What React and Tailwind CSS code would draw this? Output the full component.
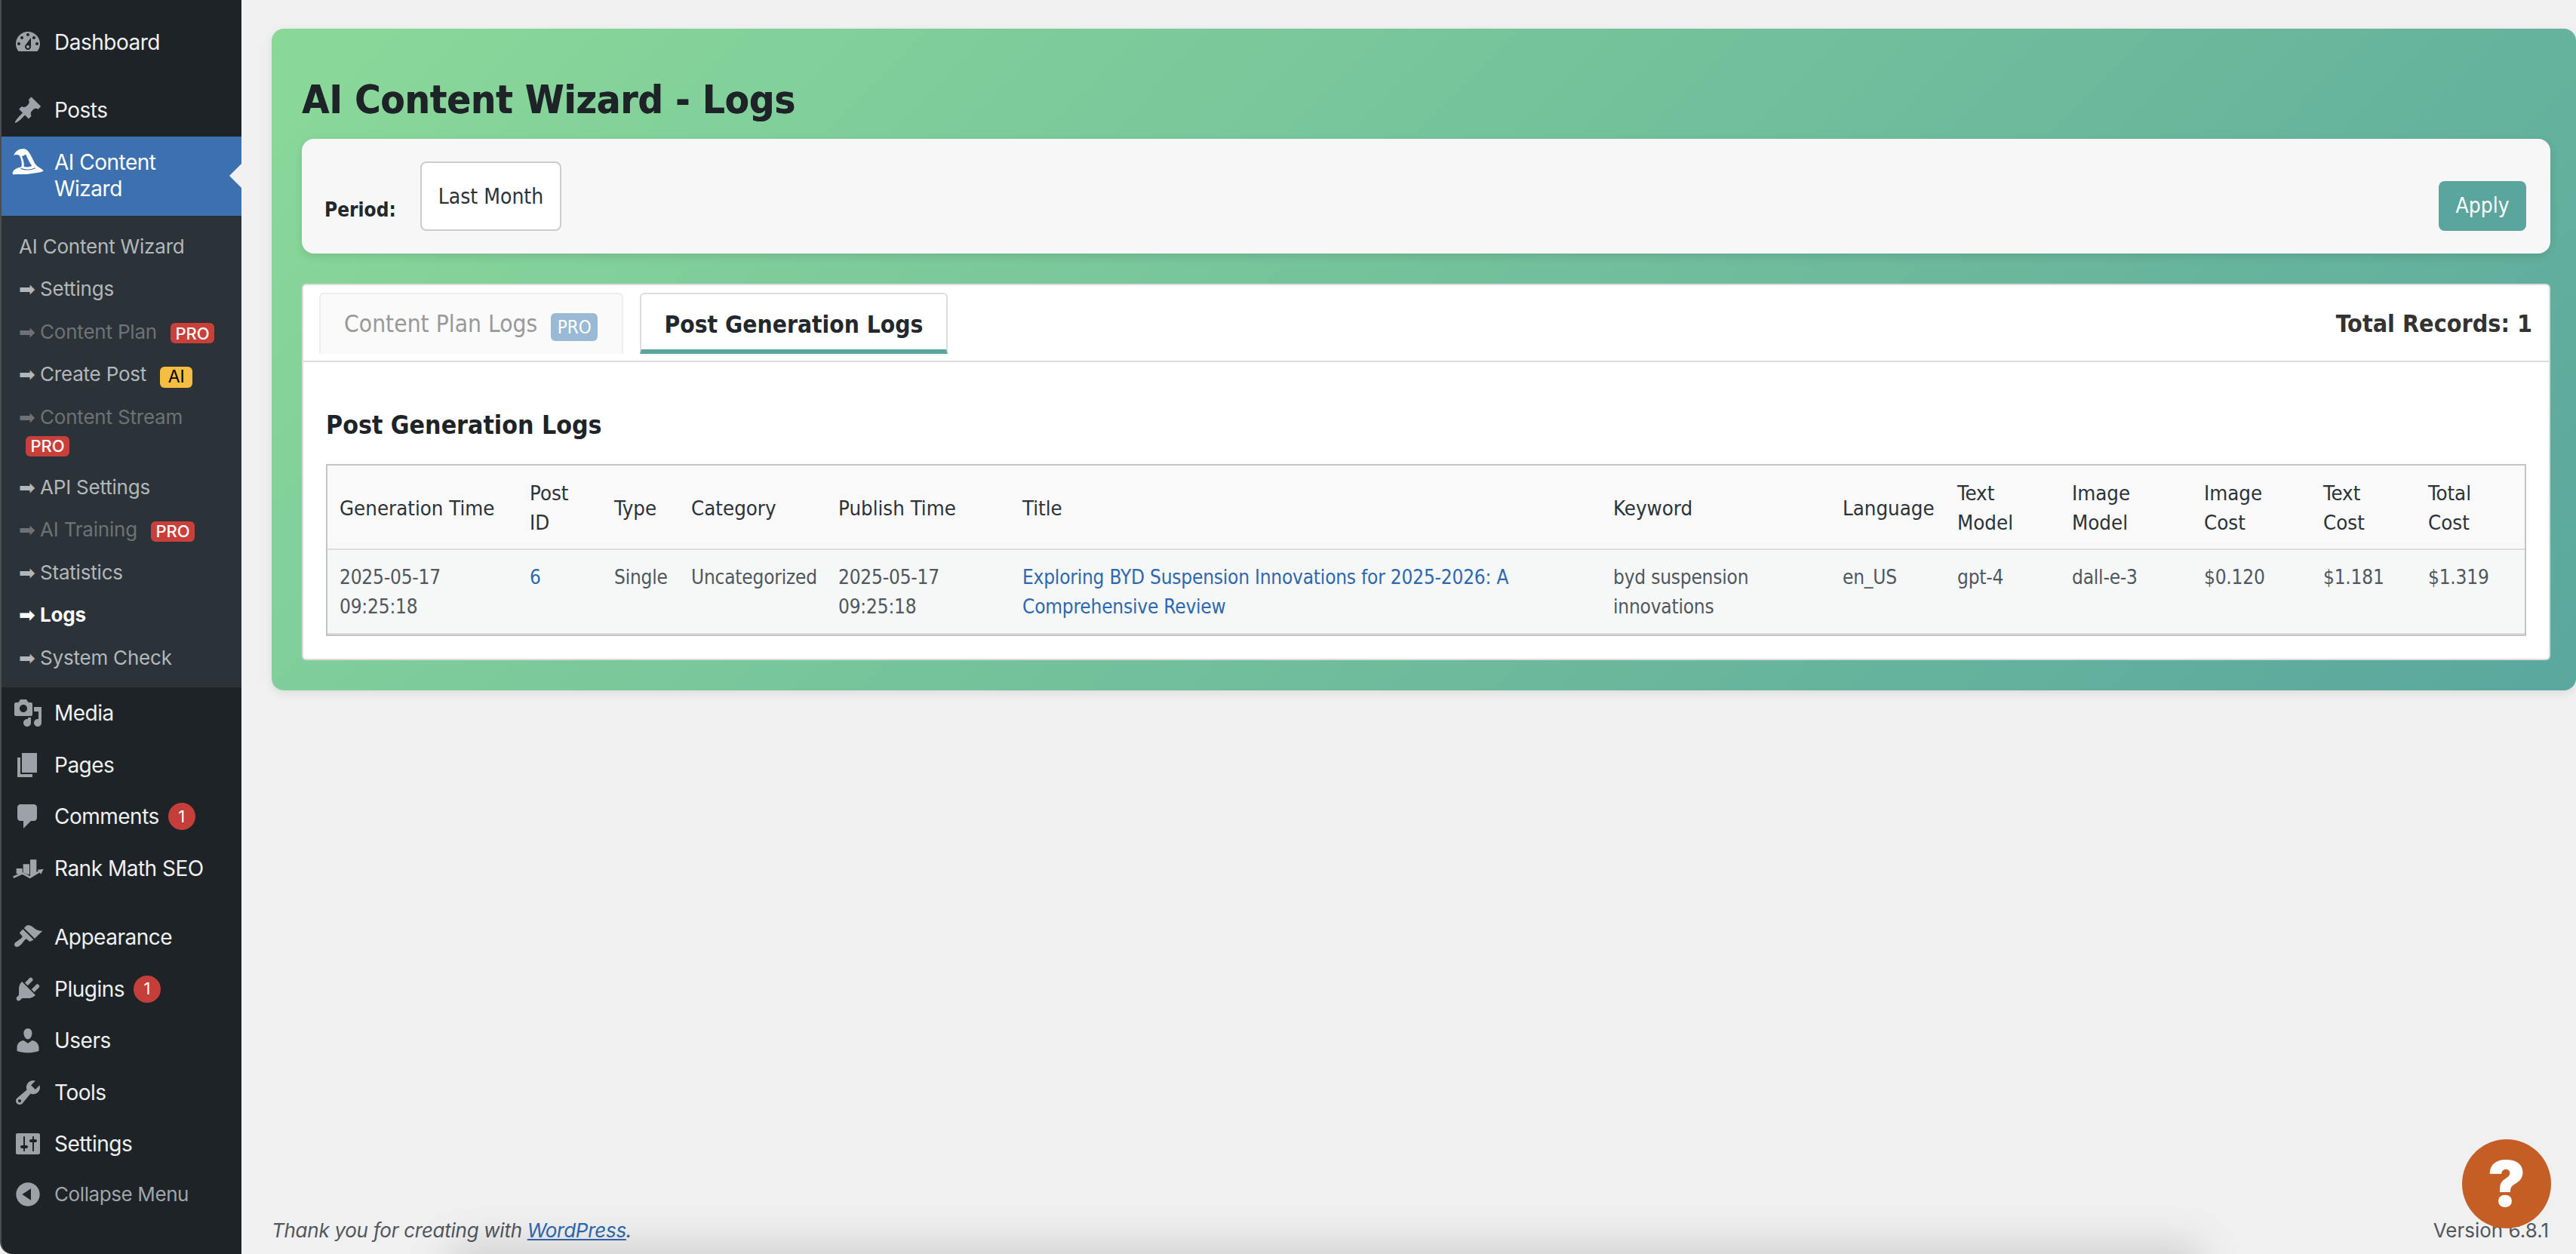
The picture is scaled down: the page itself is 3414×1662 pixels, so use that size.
import React from "react";

const Ic = ({ d, className = "" }) => (
  <svg viewBox="0 0 20 20" className={`w-[40px] h-[40px] fill-[#9ca2a7] ${className}`}>
    <path d={d} fillRule="evenodd" />
  </svg>
);

const icons = {
  dashboard: "M3.76 16h12.48c1.1-1.37 1.76-3.11 1.76-5 0-4.42-3.58-8-8-8s-8 3.58-8 8c0 1.89.66 3.63 1.76 5zM10 4c.55 0 1 .45 1 1s-.45 1-1 1-1-.45-1-1 .45-1 1-1zM6 6c.55 0 1 .45 1 1s-.45 1-1 1-1-.45-1-1 .45-1 1-1zm8 0c.55 0 1 .45 1 1s-.45 1-1 1-1-.45-1-1 .45-1 1-1zm-5.37 5.55L12 7v6c0 1.1-.9 2-2 2s-2-.9-2-2c0-.57.24-1.08.63-1.45zM4 10c.55 0 1 .45 1 1s-.45 1-1 1-1-.45-1-1 .45-1 1-1zm12 0c.55 0 1 .45 1 1s-.45 1-1 1-1-.45-1-1 .45-1 1-1zm-5 3c0-.55-.45-1-1-1s-1 .45-1 1 .45 1 1 1 1-.45 1-1z",
  post: "M10.44 3.02l1.82-1.82 6.36 6.35-1.83 1.82c-1.05-.68-2.48-.57-3.41.36l-.75.75c-.92.93-1.04 2.35-.35 3.41l-1.83 1.82-2.41-2.41-2.8 2.79c-.42.42-3.38 2.71-3.8 2.29s1.86-3.39 2.28-3.81l2.79-2.79L4.1 9.36l1.83-1.82c1.05.69 2.48.57 3.4-.36l.75-.75c.93-.92 1.05-2.35.36-3.41z",
  media: "M13 11V4c0-.55-.45-1-1-1h-1.67L9 1H5L3.67 3H2c-.55 0-1 .45-1 1v7c0 .55.45 1 1 1h10c.55 0 1-.45 1-1zM7 4.5c1.38 0 2.5 1.12 2.5 2.5S8.38 9.5 7 9.5 4.5 8.38 4.5 7 5.62 4.5 7 4.5zM14 6h5v10.5c0 1.38-1.12 2.5-2.5 2.5S14 17.88 14 16.5s1.12-2.5 2.5-2.5c.17 0 .34.02.5.05V9h-3V6zm-4 8.05V13h2v3.5c0 1.38-1.12 2.5-2.5 2.5S7 17.88 7 16.5 8.12 14 9.5 14c.17 0 .34.02.5.05z",
  pages: "M6 15V2h10v13H6zm-1 1h8v2H3V5h2v11z",
  comments: "M5 2h9c1.1 0 2 .9 2 2v7c0 1.1-.9 2-2 2h-2l-5 5v-5H5c-1.1 0-2-.9-2-2V4c0-1.1.9-2 2-2z",
  appearance: "M14.48 11.06L7.41 3.99l1.5-1.5c.5-.56 2.3-.47 3.51.32 1.21.8 1.43 1.28 2.91 2.1 1.18.64 2.45 1.26 4.45.85zm-.71.71L6.7 4.7 4.93 6.47c-.39.39-.39 1.02 0 1.41l1.06 1.06c.39.39.39 1.03 0 1.42-.6.6-1.43 1.11-2.21 1.69-.35.26-.7.53-1.01.84C1.43 13.23.4 14.96 1.49 16.06c1.1 1.1 2.83.07 4.17-1.27.31-.31.58-.66.84-1.01.58-.78 1.09-1.61 1.69-2.21.39-.39 1.02-.39 1.41 0l1.06 1.06c.39.39 1.02.39 1.41 0z",
  plugins: "M13.11 4.36L9.87 7.6 8 5.73l3.24-3.24c.35-.34 1.05-.2 1.56.32.52.51.66 1.21.31 1.55zm-8 1.77l.91-1.12 9.01 9.01-1.19.84c-.71.71-2.63 1.16-3.82 1.16H6.14L4.9 17.26c-.59.59-1.54.59-2.12 0-.59-.58-.59-1.53 0-2.12l1.24-1.24v-3.88c0-1.13.4-3.19 1.09-3.89zm7.26 3.97l3.24-3.24c.34-.35 1.04-.21 1.55.31.52.51.66 1.21.31 1.55l-3.24 3.25z",
  users: "M10 9.25c-2.27 0-2.73-3.44-2.73-3.44C7 4.02 7.82 2 9.97 2c2.16 0 2.98 2.02 2.71 3.81 0 0-.41 3.44-2.68 3.44zm0 2.57L12.72 10c2.39 0 4.52 2.33 4.52 4.53v2.49s-3.65 1.13-7.24 1.13c-3.65 0-7.24-1.13-7.24-1.13v-2.49c0-2.25 1.94-4.48 4.47-4.48z",
  tools: "M16.68 9.77c-1.34 1.34-3.3 1.67-4.95.99l-5.41 6.52c-.99.99-2.59.99-3.58 0s-.99-2.59 0-3.57l6.52-5.42c-.68-1.65-.35-3.61.99-4.95 1.28-1.28 3.12-1.62 4.72-1.06l-2.89 2.89 2.82 2.82 2.86-2.87c.53 1.58.18 3.39-1.08 4.65zM3.81 16.21c.4.39 1.04.39 1.43 0 .4-.4.4-1.04 0-1.43-.39-.4-1.03-.4-1.43 0-.39.39-.39 1.03 0 1.43z",
  settings: "M18 16V4c0-.55-.45-1-1-1H3c-.55 0-1 .45-1 1v12c0 .55.45 1 1 1h14c.55 0 1-.45 1-1zM8 11h1c.55 0 1 .45 1 1s-.45 1-1 1H8v1.5c0 .28-.22.5-.5.5s-.5-.22-.5-.5V13H6c-.55 0-1-.45-1-1s.45-1 1-1h1V5.5c0-.28.22-.5.5-.5s.5.22.5.5V11zm5-2h-1c-.55 0-1-.45-1-1s.45-1 1-1h1V5.5c0-.28.22-.5.5-.5s.5.22.5.5V7h1c.55 0 1 .45 1 1s-.45 1-1 1h-1v5.5c0 .28-.22.5-.5.5s-.5-.22-.5-.5V9z",
  collapse: "M10 2.16c4.33 0 7.84 3.51 7.84 7.84s-3.51 7.84-7.84 7.84S2.16 14.33 2.16 10 5.71 2.16 10 2.16zm2 11.72V6.12L6.18 9.97z",
};

const Hat = () => (
  <svg viewBox="0 0 168 150" className="w-[56px] h-[50px]">
    <path
      fill="#fff"
      fillRule="evenodd"
      d="M28 48 C34 30 50 20 70 22 C88 26 96 50 112 80 C120 92 135 98 146 108 C140 116 125 116 100 120 C80 124 55 122 24 124 C20 112 30 100 58 94 C62 80 58 62 50 48 C42 44 34 44 28 48 Z M60 52 C68 47 72 46 76 44 C82 60 92 78 100 90 C90 94 78 96 68 92 C70 80 66 66 60 52 Z"
    />
    <path fill="none" stroke="#3c70ae" strokeWidth="3.5" d="M56 100 C72 106 96 106 114 98" />
  </svg>
);

const RankMath = () => (
  <svg viewBox="0 0 168 150" className="w-[56px] h-[50px]">
    <path fill="#a0a5a9" d="M38 75 H62 V90 L50 96 H38 Z M65 58 H90 V100 L78 97 L65 91 Z M93 40 H118 V92 L104 102 L93 107 Z" />
    <path fill="none" stroke="#a0a5a9" strokeWidth="8" d="M26 110 L62 94 L92 110 L132 86" />
    <path fill="#a0a5a9" d="M122 80 L146 77 L136 98 Z" />
  </svg>
);

const Top = ({ icon, children, h = "h-[68.5px]", extra, dim }) => (
  <div className={`${h} flex items-center relative`}>
    <div className="w-[70px] flex justify-center shrink-0">{icon}</div>
    <span className={dim ? "text-[26px] tracking-[-0.4px] text-[#a0a5aa]" : "text-[28px] tracking-[-0.5px] text-[#f0f0f1]"}>{children}</span>
    {extra}
  </div>
);

const Count = () => (
  <span className="ml-[12px] w-[36px] h-[36px] rounded-full bg-[#c43e3a] text-white text-[22px] flex items-center justify-center">1</span>
);

const Pro = ({ className = "" }) => (
  <span className={`inline-flex items-center justify-center w-[58px] h-[27px] rounded-[6px] bg-[#c9403a] text-white text-[22px] leading-none tracking-normal font-medium align-[-1px] ${className}`}>PRO</span>
);

const Sub = ({ children, off, cur, arrow = true, after }) => (
  <div className={`pl-[23px] pr-[14px] py-[10px] leading-[36.5px] text-[26px] tracking-[-0.2px] ${cur ? "text-white font-bold" : off ? "text-[#6e7275]" : "text-[#b3b7bb]"}`}>
    {arrow && <span className="font-['DejaVu_Sans'] text-[26px] leading-[0] inline-block w-[21px]">➡</span>}
    {arrow && <span className="inline-block w-[7px]" />}
    {children}
    {after}
  </div>
);

const cols = ["w-[252px]", "w-[112px]", "w-[102px]", "w-[195px]", "w-[244px]", "w-[783px]", "w-[304px]", "w-[152px]", "w-[152px]", "w-[175px]", "w-[158px]", "w-[139px]", "w-[144px]"];

const head = [
  ["Generation Time"],
  ["Post", "ID"],
  ["Type"],
  ["Category"],
  ["Publish Time"],
  ["Title"],
  ["Keyword"],
  ["Language"],
  ["Text", "Model"],
  ["Image", "Model"],
  ["Image", "Cost"],
  ["Text", "Cost"],
  ["Total", "Cost"],
];

const link = "text-[#2e68b0]";

const row = [
  <>2025-05-17 09:25:18</>,
  <a className={link}>6</a>,
  "Single",
  "Uncategorized",
  <>2025-05-17 09:25:18</>,
  <a className={link}>Exploring BYD Suspension Innovations for 2025-2026: A Comprehensive Review</a>,
  "byd suspension innovations",
  "en_US",
  "gpt-4",
  "dall-e-3",
  "$0.120",
  "$1.181",
  "$1.319",
];

const tah = "font-['DejaVu_Sans_Condensed','DejaVu_Sans',sans-serif]";

export default function App() {
  return (
    <div className="relative w-[3414px] h-[1662px] overflow-hidden flex bg-[#f0f0f1] font-['Inter',sans-serif]">
      <aside className="w-[320px] shrink-0 h-full bg-[#1d2327] border-l-2 border-l-[#4a4e52] pt-[22px] rounded-bl-[16px]">
        <Top icon={<Ic d={icons.dashboard} />}>Dashboard</Top>
        <div className="h-[21.5px]" />
        <Top icon={<Ic d={icons.post} />}>Posts</Top>
        <div className="relative h-[105px] bg-[#3c70ae] flex items-center">
          <div className="w-[70px] flex justify-center shrink-0 -translate-y-[18px]"><Hat /></div>
          <span className="text-[28px] tracking-[-0.5px] leading-[35px] text-white">AI Content<br />Wizard</span>
          <span className="absolute right-0 top-[36px] w-0 h-0 border-y-[16px] border-y-transparent border-r-[16px] border-r-[#f0f0f1]" />
        </div>
        <div className="bg-[#2c3338] pt-[13px] pb-[11px]">
          <Sub arrow={false}>AI Content Wizard</Sub>
          <Sub>Settings</Sub>
          <Sub off after={<Pro className="ml-[18px]" />}>Content Plan</Sub>
          <Sub after={<span className="inline-flex items-center justify-center w-[43px] h-[28px] rounded-[6px] bg-[#f5bd41] text-black text-[23px] leading-none tracking-normal ml-[18px] align-[-2px]">AI</span>}>Create Post</Sub>
          <Sub off after={<><br /><Pro className="ml-[9px]" /></>}>Content Stream</Sub>
          <Sub>API Settings</Sub>
          <Sub off after={<Pro className="ml-[18px]" />}>AI Training</Sub>
          <Sub>Statistics</Sub>
          <Sub cur>Logs</Sub>
          <Sub>System Check</Sub>
        </div>
        <Top icon={<Ic d={icons.media} />}>Media</Top>
        <Top icon={<Ic d={icons.pages} />}>Pages</Top>
        <Top icon={<Ic d={icons.comments} />} extra={<Count />}>Comments</Top>
        <Top icon={<RankMath />}>Rank Math SEO</Top>
        <div className="h-[23px]" />
        <Top icon={<Ic d={icons.appearance} />}>Appearance</Top>
        <Top icon={<Ic d={icons.plugins} />} extra={<Count />}>Plugins</Top>
        <Top icon={<Ic d={icons.users} />}>Users</Top>
        <Top icon={<Ic d={icons.tools} />}>Tools</Top>
        <Top icon={<Ic d={icons.settings} />}>Settings</Top>
        <Top h="h-[64px]" dim icon={<Ic d={icons.collapse} />}>Collapse Menu</Top>
      </aside>

      <main className="relative flex-1 min-w-0 flex flex-col pl-[40px] pt-[38px]">
        <div className={`w-[3054px] h-[877px] shrink-0 rounded-[16px] bg-[linear-gradient(135deg,#8bd999_0%,#5aa79e_100%)] shadow-[0_4px_12px_rgba(0,0,0,0.08)] pl-[40px] pr-[34px] ${tah}`}>
          <h1 className="text-[52px] font-bold leading-[68px] text-[#1d2327] pt-[60px] h-[146px] whitespace-nowrap [text-shadow:0.6px_0_0_#1d2327]">AI Content Wizard - Logs</h1>
          <div className="h-[152px] bg-[#f7f7f7] rounded-[16px] shadow-[0_4px_12px_rgba(0,0,0,0.1)] pl-[30px] pr-[32px] pb-[30px] flex items-end justify-between">
            <div className="flex items-end">
              <span className="text-[26px] font-bold text-[#23282d] leading-[36px] pb-[10px] w-[127px]">Period:</span>
              <div className="w-[187px] h-[92px] bg-white border-2 border-[#ccc] rounded-[8px] flex items-center justify-center pt-[2px] text-[28px] text-[#2c3338]">Last Month</div>
            </div>
            <button className="w-[116px] h-[66px] rounded-[8px] bg-[#5aa69e] text-white text-[28px]">Apply</button>
          </div>
          <div className="mt-[40px] h-[104px] bg-white rounded-t-[6px] border-2 border-[#ddd] flex justify-between pl-[21px] pr-[22px]">
            <div className="flex pt-[10px] gap-[22px]">
              <div className="w-[403px] h-[81px] bg-[#fafafa] border-2 border-b-0 border-[#eee] rounded-t-[6px] pl-[31px] flex items-center text-[31.5px] text-[#999] whitespace-nowrap">
                Content Plan Logs
                <span className="ml-[18px] w-[62px] h-[37px] mt-[8px] rounded-[6px] bg-[#9ab9d4] text-white text-[24px] flex items-center justify-center">PRO</span>
              </div>
              <div className="w-[408px] h-[81px] bg-white border-2 border-[#ddd] border-b-[6px] border-b-[#5aa69e] rounded-t-[6px] flex items-center justify-center pt-[8px] text-[31.5px] font-bold text-[#23282d] whitespace-nowrap">Post Generation Logs</div>
            </div>
            <div className="text-[32px] font-bold text-[#333] pt-[30px] leading-[42px]">Total Records: 1</div>
          </div>
          <div className="h-[395px] bg-white rounded-b-[6px] border-2 border-t-0 border-[#ddd] pl-[30px] pr-[30px]">
            <h2 className="text-[33.6px] font-bold text-[#1d2327] leading-[44px] pt-[62px] h-[135px] whitespace-nowrap">Post Generation Logs</h2>
            <table className="w-[2916px] table-fixed border-2 border-[#c3c4c7] border-separate border-spacing-0 text-[26px] leading-[39px]">
              <colgroup>
                {cols.map((c, i) => <col key={i} className={c} />)}
              </colgroup>
              <thead>
                <tr className="bg-[#f9f9f9]">
                  {head.map((h) => (
                    <th key={h.join(" ")} className="font-normal text-left text-[27.4px] text-[#2c3338] pl-[16px] pr-[4px] pt-[17px] pb-[15px] border-b-2 border-[#ddd] align-middle">
                      {h.map((t, i) => <React.Fragment key={t}>{i > 0 && <br />}{t}</React.Fragment>)}
                    </th>
                  ))}
                </tr>
              </thead>
              <tbody>
                <tr className="bg-[#f6f7f7]">
                  {row.map((c, i) => (
                    <td key={i} className="text-[#50575e] tracking-[-0.2px] pl-[16px] pr-[8px] pt-[17px] pb-[15px] align-top border-b-2 border-[#ddd]">{c}</td>
                  ))}
                </tr>
              </tbody>
            </table>
          </div>
        </div>

        <div className="absolute left-[40px] right-[36px] top-[1613px] flex justify-between text-[26px] leading-[36px] text-[#50575e]">
          <span className="italic tracking-[-0.28px]">Thank you for creating with <a className="text-[#2e68b0] underline">WordPress</a>.</span>
          <span>Version 6.8.1</span>
        </div>
      </main>

      <div className="absolute left-[600px] right-[500px] bottom-[-40px] h-[50px] bg-black/15 blur-[25px]" />
      <div className="absolute left-[3263px] top-[1510px] w-[118px] h-[118px] rounded-full bg-[#c45e24] text-white text-[84px] font-black flex items-center justify-center">?</div>
    </div>
  );
}
